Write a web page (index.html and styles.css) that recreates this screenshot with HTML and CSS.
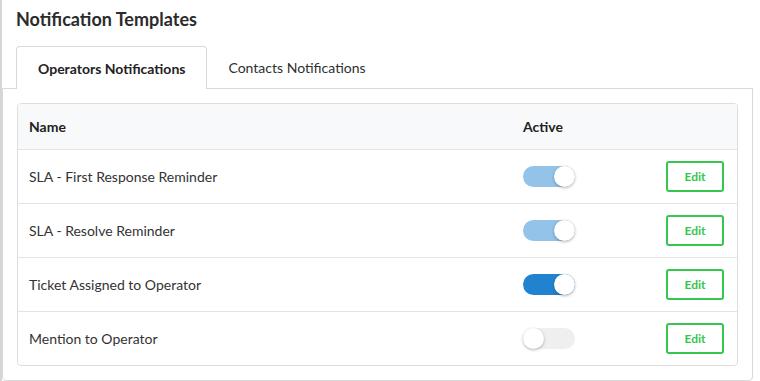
FILE: index.html
```html
<!DOCTYPE html>
<html lang="en">
<head>
    <meta charset="UTF-8">
    <meta name="viewport" content="width=device-width, initial-scale=1.0">
    <title>Notification Templates</title>
    <link rel="stylesheet" href="styles.css">
</head>
<body>
    <div class="page">
        <h1 class="page-title">Notification Templates</h1>

        <div class="tabs">
            <div class="tab active">Operators Notifications</div>
            <div class="tab">Contacts Notifications</div>
        </div>

        <div class="tab-panel">
            <div class="card">
                <div class="row head">
                    <div class="col-name">Name</div>
                    <div class="col-active">Active</div>
                    <div class="col-action"></div>
                </div>
                <div class="row">
                    <div class="col-name">SLA - First Response Reminder</div>
                    <div class="col-active"><span class="toggle on disabled"></span></div>
                    <div class="col-action"><button class="edit-button">Edit</button></div>
                </div>
                <div class="row">
                    <div class="col-name">SLA - Resolve Reminder</div>
                    <div class="col-active"><span class="toggle on disabled"></span></div>
                    <div class="col-action"><button class="edit-button">Edit</button></div>
                </div>
                <div class="row">
                    <div class="col-name">Ticket Assigned to Operator</div>
                    <div class="col-active"><span class="toggle on"></span></div>
                    <div class="col-action"><button class="edit-button">Edit</button></div>
                </div>
                <div class="row">
                    <div class="col-name">Mention to Operator</div>
                    <div class="col-active"><span class="toggle"></span></div>
                    <div class="col-action"><button class="edit-button">Edit</button></div>
                </div>
            </div>
        </div>
    </div>
</body>
</html>
```

FILE: styles.css
```css
:root {
    --text: #333333;
    --border: #d9d9d9;
    --line: #e4e4e4;
    --head-bg: #f8f9fa;
    --green: #34c64f;
    --blue: #2183cf;
    --blue-light: #93c3e8;
}

* {
    margin: 0;
    padding: 0;
    box-sizing: border-box;
}

body {
    font-family: 'Lato', 'Open Sans', sans-serif;
    color: var(--text);
    background-color: #ffffff;
}

.page {
    min-height: 100vh;
    border-left: 2px solid #d6d6d6;
    padding-right: 7px;
}

.page-title {
    font-size: 18px;
    font-weight: 700;
    line-height: 22px;
    padding: 8px 0 0 14px;
    color: #2b2b2b;
}

.tabs {
    display: flex;
    margin-top: 16px;
    padding-left: 14px;
}

.tab {
    height: 42px;
    padding: 0 21px 0 20px;
    display: flex;
    align-items: center;
    font-size: 14px;
    color: #2f2f2f;
    border: 1px solid transparent;
    border-bottom: none;
    border-radius: 4px 4px 0 0;
}

.tab.active {
    padding: 0 21px;
    font-weight: 700;
    color: #222222;
    border-color: var(--border);
    background-color: #ffffff;
    position: relative;
    margin-bottom: -1px;
    height: 43px;
}

.tab-panel {
    border: 1px solid var(--border);
    border-radius: 0 0 4px 4px;
    padding: 14px 14px 14px 14px;
}

.card {
    border: 1px solid #dedede;
    border-radius: 4px;
    overflow: hidden;
}

.row {
    display: flex;
    align-items: center;
    height: 54px;
    padding: 0 13px 0 11px;
    font-size: 14px;
    border-top: 1px solid var(--line);
}

.row.head {
    height: 45px;
    border-top: none;
    background-color: var(--head-bg);
    font-weight: 700;
    color: #222222;
}

.col-name {
    flex: 1;
}

.col-active {
    width: 143px;
    display: flex;
    align-items: center;
}

.col-action {
    width: 58px;
}

.toggle {
    display: block;
    position: relative;
    width: 52px;
    height: 21px;
    border-radius: 11px;
    background-color: #efefef;
}

.toggle::after {
    content: '';
    position: absolute;
    top: 0;
    left: 0;
    width: 21px;
    height: 21px;
    border-radius: 50%;
    background-color: #ffffff;
    box-shadow: 0 1px 3px rgba(0, 0, 0, 0.3);
}

.toggle.on {
    background-color: var(--blue);
}

.toggle.on.disabled {
    background-color: var(--blue-light);
}

.toggle.on::after {
    left: auto;
    right: 0;
}

.edit-button {
    display: block;
    width: 58px;
    height: 31px;
    border: 2px solid var(--green);
    border-radius: 3px;
    background-color: #ffffff;
    color: var(--green);
    font-family: 'Lato', 'Open Sans', sans-serif;
    font-size: 12px;
    font-weight: 700;
    cursor: pointer;
}
```
